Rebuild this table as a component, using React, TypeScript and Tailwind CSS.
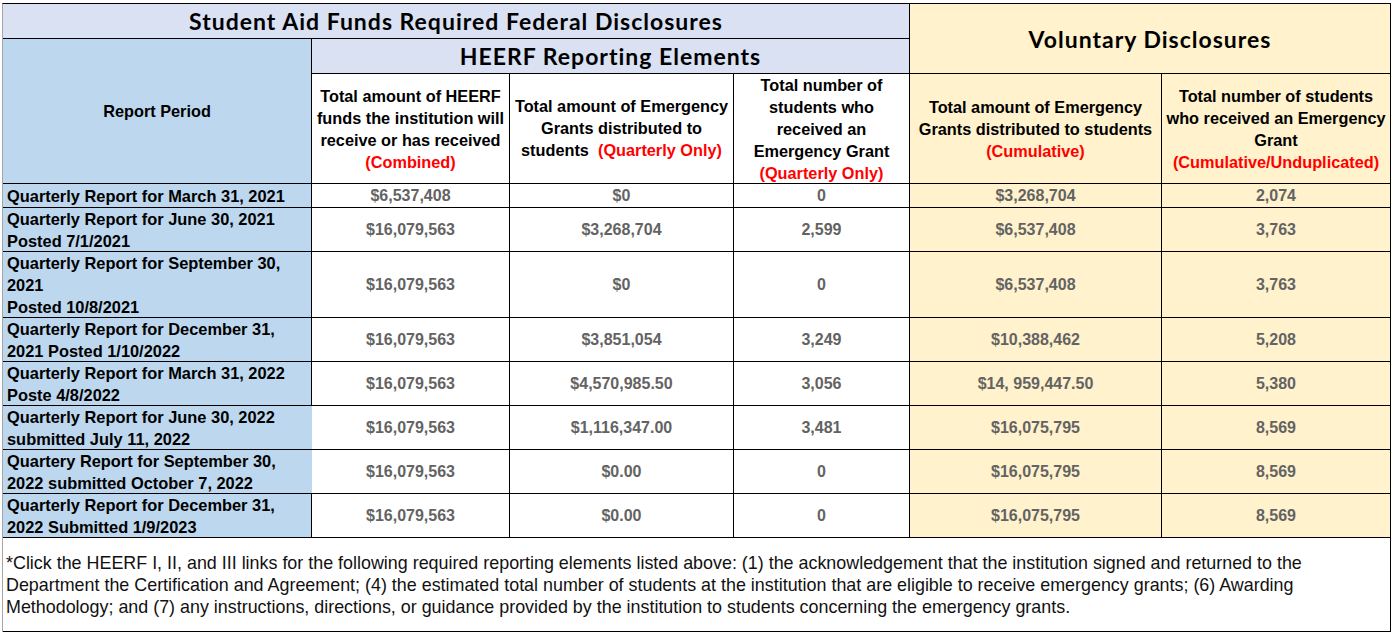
import React from "react";

const RED = "text-[#ff0000]";

type Row = {
  label: React.ReactNode;
  h: string;
  a: string;
  b: string;
  c: string;
  d: string;
  e: string;
  noBorder?: boolean;
};

const rows: Row[] = [
  { label: <>Quarterly Report for March 31, 2021</>, h: "h-[24px]", a: "$6,537,408", b: "$0", c: "0", d: "$3,268,704", e: "2,074" },
  { label: <>Quarterly Report for June 30, 2021<br />Posted 7/1/2021</>, h: "h-[44px]", a: "$16,079,563", b: "$3,268,704", c: "2,599", d: "$6,537,408", e: "3,763" },
  { label: <>Quarterly Report for September 30,<br />2021<br />Posted 10/8/2021</>, h: "h-[66px]", a: "$16,079,563", b: "$0", c: "0", d: "$6,537,408", e: "3,763" },
  { label: <>Quarterly Report for December 31,<br />2021 Posted 1/10/2022</>, h: "h-[44px]", a: "$16,079,563", b: "$3,851,054", c: "3,249", d: "$10,388,462", e: "5,208" },
  { label: <>Quarterly Report for March 31, 2022<br />Poste 4/8/2022</>, h: "h-[44px]", a: "$16,079,563", b: "$4,570,985.50", c: "3,056", d: "$14, 959,447.50", e: "5,380" },
  { label: <>Quarterly Report for June 30, 2022<br />submitted July 11, 2022</>, h: "h-[44px]", a: "$16,079,563", b: "$1,116,347.00", c: "3,481", d: "$16,075,795", e: "8,569", noBorder: true },
  { label: <>Quartery Report for September 30,<br />2022 submitted October 7, 2022</>, h: "h-[44px]", a: "$16,079,563", b: "$0.00", c: "0", d: "$16,075,795", e: "8,569", noBorder: true },
  { label: <>Quarterly Report for December 31,<br />2022 Submitted 1/9/2023</>, h: "h-[44px]", a: "$16,079,563", b: "$0.00", c: "0", d: "$16,075,795", e: "8,569" },
];

function Num({ children, yellow, h }: { children: React.ReactNode; yellow?: boolean; h: string }) {
  return (
    <div
      className={`${h} flex items-center justify-center border-r border-b border-black text-[16px] font-bold text-[#636363] ${
        yellow ? "bg-[#fff2cc]" : "bg-white"
      }`}
    >
      {children}
    </div>
  );
}

const HEAD = "h-[110px] flex items-center justify-center text-center border-r border-b border-black font-bold text-[16.3px] whitespace-nowrap";
const BIG = "font-['Lato',sans-serif] font-bold text-[23px] tracking-[1px]";

export default function App() {
  return (
    <div className="w-[1393px] h-[635px] bg-white overflow-hidden font-['Liberation_Sans',Arial,sans-serif] text-black">
      <div className="ml-[2px] mt-[3px] w-[1389px] border-t border-black border-l border-l-[#a6a6a6]">
        <div className="grid grid-cols-[309px_198px_224px_176px_252px_229px] leading-[22px]">
          {/* Title */}
          <div className={`col-span-4 h-[35px] flex items-center justify-center bg-[#d9e1f2] border-r border-b border-black ${BIG}`}>
            Student Aid Funds Required Federal Disclosures
          </div>
          {/* Voluntary */}
          <div className={`col-span-2 row-span-2 flex items-center justify-center bg-[#fff2cc] border-r border-b border-black ${BIG}`}>
            Voluntary Disclosures
          </div>
          {/* Report Period */}
          <div className="row-span-2 flex items-center justify-center bg-[#bdd7ee] border-r border-b border-black font-bold text-[16.3px]">
            Report Period
          </div>
          {/* HEERF */}
          <div className={`col-span-3 h-[35px] flex items-center justify-center bg-[#d9e1f2] border-r border-b border-black ${BIG}`}>
            HEERF Reporting Elements
          </div>
          {/* Headers */}
          <div className={`${HEAD} bg-white`}>
            <div>
              Total amount of HEERF<br />funds the institution will<br />receive or has received<br />
              <span className={RED}>(Combined)</span>
            </div>
          </div>
          <div className={`${HEAD} bg-white`}>
            <div className="pb-[1px]">
              Total amount of Emergency<br />Grants distributed to<br />
              students&nbsp; <span className={RED}>(Quarterly Only)</span>
            </div>
          </div>
          <div className={`${HEAD} bg-white`}>
            <div>
              Total number of<br />students who<br />received an<br />Emergency Grant<br />
              <span className={RED}>(Quarterly Only)</span>
            </div>
          </div>
          <div className={`${HEAD} bg-[#fff2cc]`}>
            <div>
              Total amount of Emergency<br />Grants distributed to students<br />
              <span className={RED}>(Cumulative)</span>
            </div>
          </div>
          <div className={`${HEAD} bg-[#fff2cc]`}>
            <div>
              Total number of students<br />who received an Emergency<br />Grant<br />
              <span className={RED}>(Cumulative/Unduplicated)</span>
            </div>
          </div>

          {rows.map((r, i) => (
            <React.Fragment key={i}>
              <div
                className={`${r.h} flex items-center bg-[#bdd7ee] border-b border-black pl-[4px] font-bold text-[16.4px] whitespace-nowrap ${
                  r.noBorder ? "" : "border-r"
                }`}
              >
                <div>{r.label}</div>
              </div>
              <Num h={r.h}>{r.a}</Num>
              <Num h={r.h}>{r.b}</Num>
              <Num h={r.h}>{r.c}</Num>
              <Num h={r.h} yellow>{r.d}</Num>
              <Num h={r.h} yellow>{r.e}</Num>
            </React.Fragment>
          ))}

          <div className="col-span-6 h-[94px] flex items-center bg-white border-r border-b border-black pl-[3px] text-[17.9px] text-[#111111] whitespace-nowrap">
            <p>
              *Click the HEERF I, II, and III links for the following required reporting elements listed above: (1) the acknowledgement that the institution signed and returned to the
              <br />
              Department the Certification and Agreement; (4) the estimated total number of students at the institution that are eligible to receive emergency grants; (6) Awarding
              <br />
              Methodology; and (7) any instructions, directions, or guidance provided by the institution to students concerning the emergency grants.
            </p>
          </div>
        </div>
      </div>
    </div>
  );
}
